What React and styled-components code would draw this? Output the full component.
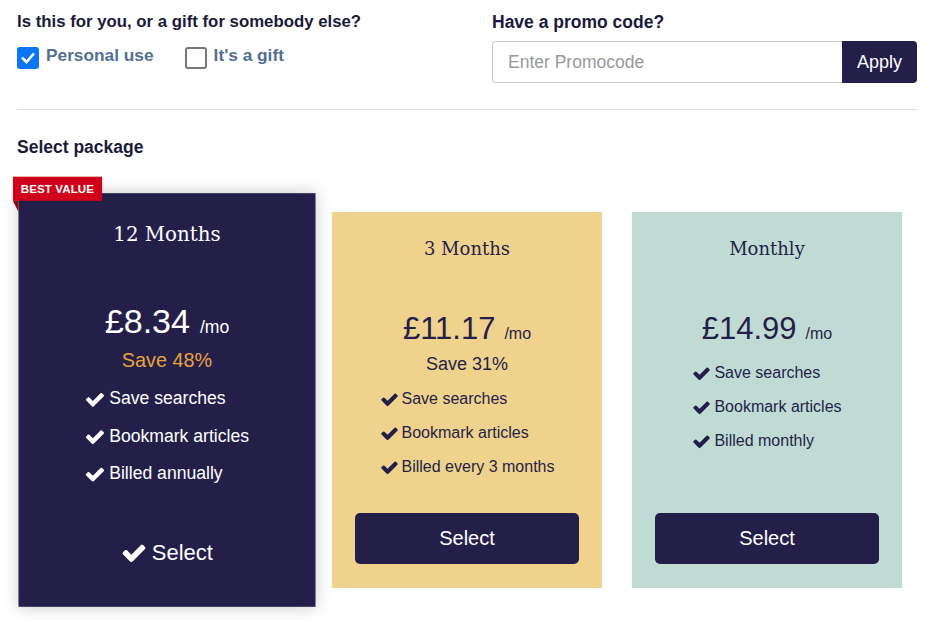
import React, { useState } from "react";
import styled, { createGlobalStyle, css } from "styled-components";

const GlobalStyle = createGlobalStyle`
  html, body { margin: 0; padding: 0; background: #fff; }
  body { font-family: "Liberation Sans", Arial, sans-serif; color: #1c1a3a; }
  * { box-sizing: border-box; }
`;

const NAVY = "#241f49";

const Page = styled.div`
  width: 928px;
  min-height: 100vh;
  padding: 12px 11px 0 17px;
`;

const TopGrid = styled.div`
  display: grid;
  grid-template-columns: 1fr 425px;
  width: 900px;
`;

const Heading = styled.h2`
  margin: 0;
  font-size: ${(p) => p.$size || "17.5px"};
  line-height: 20px;
  font-weight: 700;
  color: #1c1a3a;
`;

const CheckRow = styled.div`
  display: flex;
  align-items: flex-start;
  gap: 31px;
  margin-top: 15px;
`;

const CheckLabel = styled.label`
  display: flex;
  align-items: flex-start;
  gap: 7px;
  font-size: 17.3px;
  font-weight: 700;
  line-height: 16px;
  color: #52708f;
  cursor: pointer;
`;

const Box = styled.span`
  width: 22px;
  height: 22px;
  border-radius: 3px;
  display: flex;
  align-items: center;
  justify-content: center;
  flex: none;
  ${(p) =>
    p.$checked
      ? css`
          background: #0b76f5;
          border: none;
        `
      : css`
          background: #fff;
          border: 2px solid #777;
        `}
`;

const PromoRow = styled.div`
  display: flex;
  margin-top: 9px;
  height: 42px;
`;

const PromoInput = styled.input`
  flex: 1;
  min-width: 0;
  height: 42px;
  border: 1px solid #ccc;
  border-right: none;
  border-radius: 4px 0 0 4px;
  padding: 0 15px;
  font-family: "Liberation Sans", Arial, sans-serif;
  font-size: 17.5px;
  color: #333;
  outline: none;
  &::placeholder { color: #999; }
`;

const ApplyButton = styled.button`
  width: 75px;
  height: 42px;
  border: none;
  border-radius: 0 4px 4px 0;
  background: ${NAVY};
  color: #fff;
  font-family: "Liberation Sans", Arial, sans-serif;
  font-size: 18px;
  cursor: pointer;
`;

const Divider = styled.hr`
  width: 900px;
  margin: 26px 0 0;
  border: none;
  border-top: 1px solid #ddd;
`;

const SectionTitle = styled(Heading)`
  margin-top: 27px;
`;

const Cards = styled.div`
  display: flex;
  gap: 30px;
  width: 900px;
  padding: 0 15px;
  margin-top: 55px;
  align-items: stretch;
`;

const Card = styled.div`
  position: relative;
  flex: 1;
  display: flex;
  flex-direction: column;
  align-items: center;
  padding: 25px 23px 24px;
  background: ${(p) => p.$bg};
  color: ${(p) => (p.$featured ? "#fff" : NAVY)};
  ${(p) =>
    p.$featured &&
    css`
      transform: scale(1.1);
      box-shadow: 0 0 14px rgba(0, 0, 0, 0.22);
      z-index: 1;
    `}
`;

const Ribbon = styled.div`
  position: absolute;
  left: -5.5px;
  top: -15.5px;
  height: 22px;
  padding: 0 7.5px;
  background: #d0021b;
  color: #fff;
  font-size: 10.5px;
  font-weight: 700;
  line-height: 22px;
  letter-spacing: 0.1px;
  box-shadow: 0 1px 2px rgba(0, 0, 0, 0.25);
  &::after {
    content: "";
    position: absolute;
    left: 0;
    top: 22px;
    border-top: 10px solid #8c0716;
    border-left: 5.5px solid transparent;
  }
`;

const Title = styled.h3`
  margin: 0;
  font-family: "DejaVu Serif", Georgia, serif;
  font-weight: 400;
  font-size: 18px;
  line-height: 24px;
`;

const PriceLine = styled.div`
  margin-top: 48px;
  height: 40px;
  display: flex;
  align-items: baseline;
  justify-content: center;
  white-space: nowrap;
`;

const Amount = styled.span`
  font-size: 31px;
  line-height: 40px;
`;

const Per = styled.span`
  font-size: 16px;
  margin-left: 9px;
`;

const Save = styled.div`
  margin-top: 4px;
  font-size: 18px;
  line-height: 22px;
  color: ${(p) => (p.$featured ? "#e8a33d" : NAVY)};
`;

const Features = styled.ul`
  list-style: none;
  margin: 7px 0 0;
  padding: 0;
  display: inline-block;
  align-self: center;
`;

const Feature = styled.li`
  display: flex;
  align-items: center;
  gap: 3px;
  padding: 7px 0;
  font-size: 16px;
  line-height: 20px;
  white-space: nowrap;
`;

const SelectButton = styled.button`
  margin-top: auto;
  width: 100%;
  height: 51px;
  border-radius: 5px;
  border: none;
  display: flex;
  align-items: center;
  justify-content: center;
  gap: 4px;
  font-family: "Liberation Sans", Arial, sans-serif;
  font-size: 20px;
  color: #fff;
  cursor: pointer;
  background: ${(p) => (p.$featured ? "transparent" : NAVY)};
`;

const Spacer = styled.div`
  height: 29px;
  flex: none;
`;

function CheckIcon({ size = 16, color = "currentColor" }) {
  return (
    <svg width={size} height={size} viewBox="0 0 1792 1792" fill={color} aria-hidden="true">
      <path d="M1671 566q0 40-28 68l-724 724-136 136q-28 28-68 28t-68-28l-136-136-362-362q-28-28-28-68t28-68l136-136q28-28 68-28t68 28l294 295 656-657q28-28 68-28t68 28l136 136q28 28 28 68z" />
    </svg>
  );
}

function BoxTick() {
  return (
    <svg width="16" height="16" viewBox="0 0 16 16" aria-hidden="true">
      <path d="M3 8.5 L6.5 12 L13 4.5" fill="none" stroke="#fff" strokeWidth="2.6" strokeLinecap="square" />
    </svg>
  );
}

function Checkbox({ checked, label, onClick }) {
  return (
    <CheckLabel onClick={onClick}>
      <Box $checked={checked}>{checked && <BoxTick />}</Box>
      {label}
    </CheckLabel>
  );
}

const plans = [
  {
    title: "12 Months",
    price: "£8.34",
    save: "Save 48%",
    features: ["Save searches", "Bookmark articles", "Billed annually"],
    bg: NAVY,
    featured: true,
  },
  {
    title: "3 Months",
    price: "£11.17",
    save: "Save 31%",
    features: ["Save searches", "Bookmark articles", "Billed every 3 months"],
    bg: "#efd28c",
  },
  {
    title: "Monthly",
    price: "£14.99",
    features: ["Save searches", "Bookmark articles", "Billed monthly"],
    bg: "#c0dbd4",
  },
];

export default function App() {
  const [gift, setGift] = useState(false);
  return (
    <Page>
      <GlobalStyle />
      <TopGrid>
        <div>
          <Heading $size="16.8px">Is this for you, or a gift for somebody else?</Heading>
          <CheckRow>
            <Checkbox checked={!gift} label="Personal use" onClick={() => setGift(false)} />
            <Checkbox checked={gift} label="It's a gift" onClick={() => setGift(true)} />
          </CheckRow>
        </div>
        <div>
          <Heading>Have a promo code?</Heading>
          <PromoRow>
            <PromoInput placeholder="Enter Promocode" />
            <ApplyButton>Apply</ApplyButton>
          </PromoRow>
        </div>
      </TopGrid>
      <Divider />
      <SectionTitle>Select package</SectionTitle>
      <Cards>
        {plans.map((p) => (
          <Card key={p.title} $bg={p.bg} $featured={p.featured}>
            {p.featured && <Ribbon>BEST VALUE</Ribbon>}
            <Title>{p.title}</Title>
            <PriceLine>
              <Amount>{p.price}</Amount>
              <Per>/mo</Per>
            </PriceLine>
            {p.save && <Save $featured={p.featured}>{p.save}</Save>}
            <Features>
              {p.features.map((f) => (
                <Feature key={f}>
                  <CheckIcon size={19} />
                  {f}
                </Feature>
              ))}
            </Features>
            <Spacer />
            <SelectButton $featured={p.featured}>
              {p.featured && <CheckIcon size={24} />}
              Select
            </SelectButton>
          </Card>
        ))}
      </Cards>
    </Page>
  );
}
